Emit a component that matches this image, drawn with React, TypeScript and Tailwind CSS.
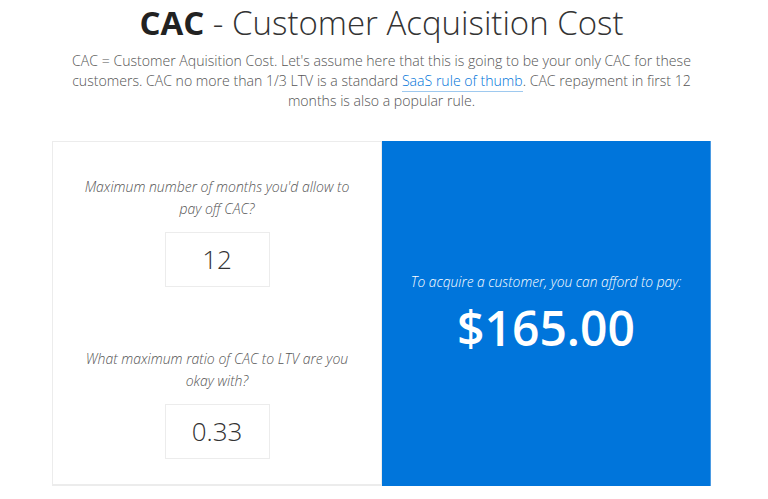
import React from "react";

export default function App() {
  return (
    <div className="w-[763px] bg-white text-[#444]" style={{ fontFamily: '"Open Sans", "Liberation Sans", sans-serif' }}>
      <h1 className="pt-[1px] text-center text-[33px] leading-[44px] font-light text-[#333]">
        <span className="font-bold text-[#222]">CAC</span> - Customer Acquisition Cost
      </h1>
      <p className="mx-auto mt-[6px] w-[636px] text-center text-[14.1px] leading-[20px] font-light text-[#555]">
        CAC = Customer Aquisition Cost. Let's assume here that this is going to be your only CAC for these customers. CAC no more than 1/3 LTV is a standard{" "}
        <a className="text-[#0074d9] border-b border-[#9ec9ef] pb-[1px]">SaaS rule of thumb</a>. CAC repayment in first 12 months is also a popular rule.
      </p>
      <div className="mt-[30px] ml-[52px] flex h-[345px] w-[659px]">
        <div className="flex w-[330px] flex-col border border-b-2 border-[#ececec] bg-white">
          <div className="flex flex-col items-center pt-[34px]">
            <div className="w-[275px] text-center text-[14px] leading-[22px] font-light italic text-[#555]">
              Maximum number of months you'd allow to pay off CAC?
            </div>
            <div className="mt-[12px] flex h-[55px] w-[105px] items-center justify-center border border-[#ececec] text-[26px] font-light text-[#333]">
              12
            </div>
          </div>
          <div className="flex flex-col items-center pt-[61px]">
            <div className="w-[275px] text-center text-[14px] leading-[22px] font-light italic text-[#555]">
              What maximum ratio of CAC to LTV are you okay with?
            </div>
            <div className="mt-[12px] flex h-[55px] w-[105px] items-center justify-center border border-[#ececec] text-[26px] font-light text-[#333]">
              0.33
            </div>
          </div>
        </div>
        <div className="flex w-[329px] flex-col items-center justify-center border-r border-[#4b9be3] bg-[#0075db] text-white">
          <div className="text-[13.8px] leading-[20px] font-light italic">To acquire a customer, you can afford to pay:</div>
          <div className="mt-[8px] text-[48px] leading-[56px] font-semibold">$165.00</div>
        </div>
      </div>
    </div>
  );
}
